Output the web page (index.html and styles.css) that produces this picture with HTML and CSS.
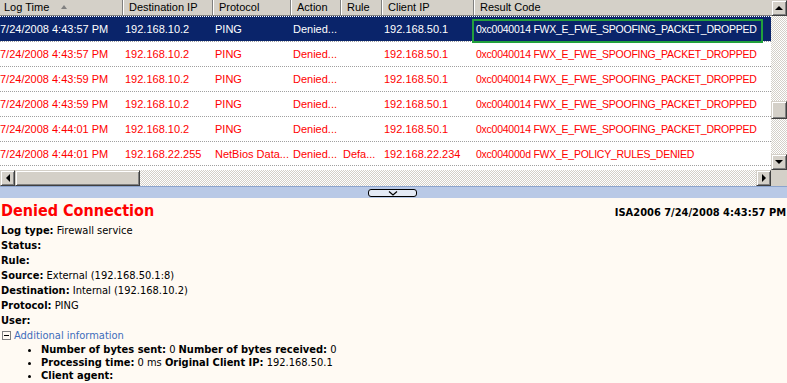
FILE: index.html
```html
<!DOCTYPE html>
<html lang="en">
<head>
  <meta charset="UTF-8" />
  <title>ISA Server Log</title>
  <link rel="stylesheet" href="styles.css">
</head>
<body>

<div class="log-pane">
  <div class="list">
    <div class="row head">
      <div class="cell">Log Time <span class="sort"></span></div>
      <div class="cell">Destination IP</div>
      <div class="cell">Protocol</div>
      <div class="cell">Action</div>
      <div class="cell">Rule</div>
      <div class="cell">Client IP</div>
      <div class="cell">Result Code</div>
    </div>
    <div class="row sel">
      <div class="cell">7/24/2008 4:43:57 PM</div>
      <div class="cell">192.168.10.2</div>
      <div class="cell">PING</div>
      <div class="cell">Denied...</div>
      <div class="cell"></div>
      <div class="cell">192.168.50.1</div>
      <div class="cell code">0xc0040014 FWX_E_FWE_SPOOFING_PACKET_DROPPED</div>
    </div>
    <div class="row">
      <div class="cell">7/24/2008 4:43:57 PM</div>
      <div class="cell">192.168.10.2</div>
      <div class="cell">PING</div>
      <div class="cell">Denied...</div>
      <div class="cell"></div>
      <div class="cell">192.168.50.1</div>
      <div class="cell code">0xc0040014 FWX_E_FWE_SPOOFING_PACKET_DROPPED</div>
    </div>
    <div class="row">
      <div class="cell">7/24/2008 4:43:59 PM</div>
      <div class="cell">192.168.10.2</div>
      <div class="cell">PING</div>
      <div class="cell">Denied...</div>
      <div class="cell"></div>
      <div class="cell">192.168.50.1</div>
      <div class="cell code">0xc0040014 FWX_E_FWE_SPOOFING_PACKET_DROPPED</div>
    </div>
    <div class="row">
      <div class="cell">7/24/2008 4:43:59 PM</div>
      <div class="cell">192.168.10.2</div>
      <div class="cell">PING</div>
      <div class="cell">Denied...</div>
      <div class="cell"></div>
      <div class="cell">192.168.50.1</div>
      <div class="cell code">0xc0040014 FWX_E_FWE_SPOOFING_PACKET_DROPPED</div>
    </div>
    <div class="row">
      <div class="cell">7/24/2008 4:44:01 PM</div>
      <div class="cell">192.168.10.2</div>
      <div class="cell">PING</div>
      <div class="cell">Denied...</div>
      <div class="cell"></div>
      <div class="cell">192.168.50.1</div>
      <div class="cell code">0xc0040014 FWX_E_FWE_SPOOFING_PACKET_DROPPED</div>
    </div>
    <div class="row last">
      <div class="cell">7/24/2008 4:44:01 PM</div>
      <div class="cell">192.168.22.255</div>
      <div class="cell">NetBios Data...</div>
      <div class="cell">Denied...</div>
      <div class="cell">Defa...</div>
      <div class="cell">192.168.22.234</div>
      <div class="cell code">0xc004000d FWX_E_POLICY_RULES_DENIED</div>
    </div>
    <div class="focus"></div>
  </div>

  <div class="vscroll">
    <div class="sbtn"><span class="arrow up"></span></div>
    <div class="track"><div class="thumb"></div></div>
    <div class="sbtn"><span class="arrow down"></span></div>
  </div>

  <div class="hscroll">
    <div class="sbtn"><span class="arrow left"></span></div>
    <div class="thumb"></div>
    <div class="track"></div>
    <div class="sbtn"><span class="arrow right"></span></div>
  </div>

  <div class="corner"></div>
</div>

<div class="splitter">
  <div class="split-btn">
    <svg width="12" height="5" viewBox="0 0 12 5"><path d="M2 0.5 L6 4 L10 0.5" fill="none" stroke="#000" stroke-width="1.2"/></svg>
  </div>
</div>

<div class="details">
  <div class="title-row">
    <h1>Denied Connection</h1>
    <span class="stamp">ISA2006 7/24/2008 4:43:57 PM</span>
  </div>
  <div class="field"><b>Log type:</b> Firewall service</div>
  <div class="field"><b>Status:</b></div>
  <div class="field"><b>Rule:</b></div>
  <div class="field"><b>Source:</b> External (192.168.50.1:8)</div>
  <div class="field"><b>Destination:</b> Internal (192.168.10.2)</div>
  <div class="field"><b>Protocol:</b> PING</div>
  <div class="field"><b>User:</b></div>
  <div class="field more"><span class="toggle"></span><span class="link">Additional information</span></div>
  <ul class="extra">
    <li><b>Number of bytes sent:</b> 0 <b>Number of bytes received:</b> 0</li>
    <li><b>Processing time:</b> 0 ms <b>Original Client IP:</b> 192.168.50.1</li>
    <li><b>Client agent:</b></li>
  </ul>
</div>

</body>
</html>
```

FILE: styles.css
```css
:root {
  --face: #d4d0c8;
  --shadow: #808080;
  --dark: #404040;
  --navy: #0a246a;
  --red: #ff0000;
  --cream: #fffaf3;
}

* {
  box-sizing: border-box;
}

body {
  margin: 0;
  width: 787px;
  height: 383px;
  overflow: hidden;
  font-family: "Liberation Sans", Arial, sans-serif;
  font-size: 11px;
  background: var(--cream);
}

/* top list with scrollbars */
.log-pane {
  display: grid;
  grid-template-columns: 771px 16px;
  grid-template-rows: 170px 16px;
  background: #fff;
}

.list {
  position: relative;
  overflow: hidden;
}

.row {
  display: grid;
  grid-template-columns: 125px 90px 78px 50px 41px 92px 300px;
  margin-left: -2px;
  height: 25px;
  border-top: 1px dotted #a0a0a0;
  color: var(--red);
}

.row.last {
  border-bottom: 1px dotted #a0a0a0;
}

.row .cell {
  padding-left: 2px;
  line-height: 24px;
  white-space: nowrap;
  overflow: hidden;
}

.row .cell.code {
  font-size: 10.5px;
  letter-spacing: -0.25px;
}

.row.sel {
  background: var(--navy);
  color: #fff;
  border-top-color: #fff;
}

.row.head {
  height: 16px;
  border-top: none;
  color: #000;
  background: var(--face);
  border-bottom: 1px solid var(--shadow);
}

.row.head .cell {
  line-height: 15px;
  padding-left: 6px;
  border-right: 1px solid var(--shadow);
  box-shadow: inset 1px 0 #fff;
}

.row.head + .row {
  border-top: 1px dotted #fff;
}

.sort {
  display: inline-block;
  margin-left: 9px;
  vertical-align: 2px;
  border-left: 3px solid transparent;
  border-right: 3px solid transparent;
  border-bottom: 4px solid var(--shadow);
}

.focus {
  position: absolute;
  left: 472px;
  top: 19px;
  width: 291px;
  height: 24px;
  border: 2px solid #22a03c;
}

/* scrollbars */
.sbtn,
.hscroll .thumb,
.vscroll .thumb,
.corner {
  background: var(--face);
  border: 1px solid;
  border-color: var(--face) var(--dark) var(--dark) var(--face);
  box-shadow: inset 1px 1px #fff, inset -1px -1px var(--shadow);
}

.corner {
  border: none;
  box-shadow: none;
}

.track {
  background-color: #fff;
  background-image: conic-gradient(var(--face) 25%, #fff 0 50%, var(--face) 0 75%, #fff 0);
  background-size: 2px 2px;
}

.vscroll {
  display: flex;
  flex-direction: column;
}

.vscroll .sbtn {
  height: 16px;
}

.vscroll .track {
  flex: 1;
}

.vscroll .thumb {
  margin-top: 85px;
  height: 18px;
}

.hscroll {
  display: flex;
}

.hscroll .sbtn {
  width: 15px;
}

.hscroll .thumb {
  width: 125px;
}

.hscroll .track {
  flex: 1;
}

.sbtn {
  display: flex;
  align-items: center;
  justify-content: center;
}

.arrow {
  width: 0;
  height: 0;
  border: 4px solid transparent;
}

.arrow.up {
  border-top: none;
  border-bottom: 4px solid #000;
}

.arrow.down {
  border-bottom: none;
  border-top: 4px solid #000;
}

.arrow.left {
  border-left: none;
  border-right: 4px solid #000;
}

.arrow.right {
  border-right: none;
  border-left: 4px solid #000;
}

/* splitter */
.splitter {
  height: 12px;
  background: #b9c9e6;
  border-top: 1px solid #8ca4cd;
  display: flex;
  justify-content: center;
  padding-top: 2px;
}

.split-btn {
  width: 49px;
  height: 8px;
  margin-left: -2px;
  border: 1px solid #000;
  border-radius: 3px;
  background: #e4eaf5;
  display: flex;
  justify-content: center;
  align-items: center;
}

/* details */
.details {
  font-family: "DejaVu Sans Condensed", "DejaVu Sans", sans-serif;
  font-stretch: condensed;
  font-size: 11px;
  color: #000;
  padding: 3px 1px 0 1px;
}

.title-row {
  display: flex;
  justify-content: space-between;
  align-items: baseline;
  height: 22px;
}

h1 {
  margin: 0;
  color: var(--red);
  font-size: 16px;
  font-weight: bold;
  line-height: 19px;
}

.stamp {
  font-weight: bold;
}

.field {
  line-height: 15px;
}

.more {
  display: flex;
  align-items: center;
}

.toggle {
  position: relative;
  width: 9px;
  height: 9px;
  border: 1px solid var(--shadow);
  margin: 0 3px 0 1px;
}

.toggle::after {
  content: "";
  position: absolute;
  left: 1px;
  top: 3px;
  width: 5px;
  height: 1px;
  background: #000;
}

.link {
  color: #3d6cbb;
}

.extra {
  margin: 0;
  padding-left: 40px;
}

.extra li {
  line-height: 13px;
}
```
